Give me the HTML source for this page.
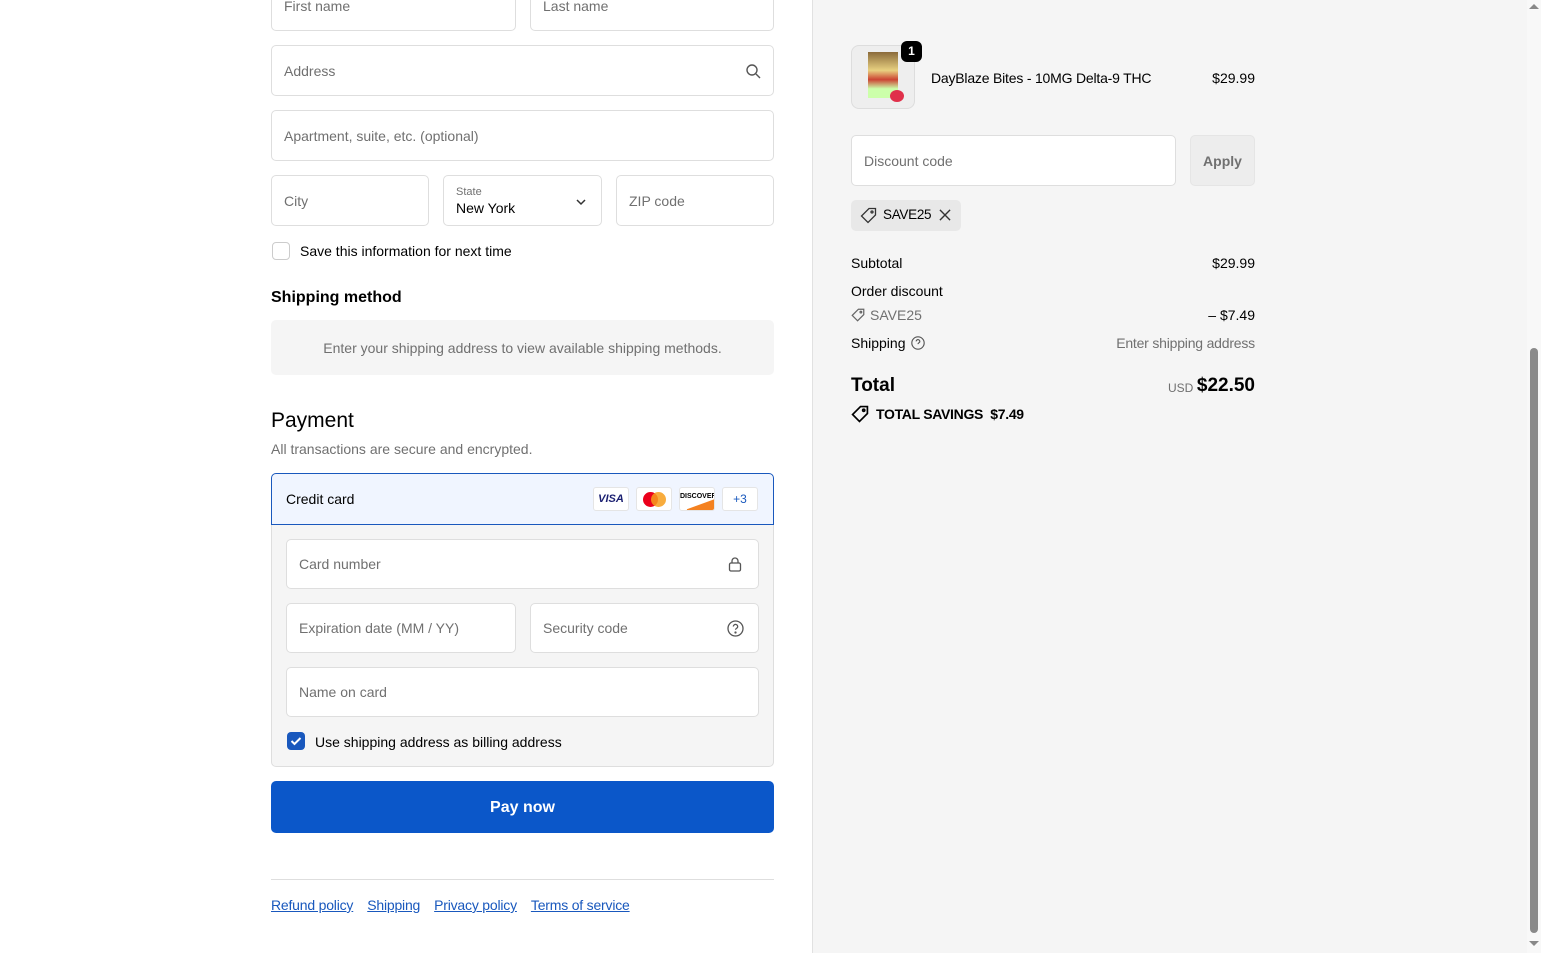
<!DOCTYPE html>
<html><head><meta charset="utf-8"><style>
*{box-sizing:border-box;margin:0;padding:0}
body{width:1541px;height:953px;overflow:hidden;font-family:"Liberation Sans",sans-serif;color:#000;background:#fff;position:relative;font-size:14px}
.right{position:absolute;left:812px;top:0;width:715px;height:953px;background:#f5f5f5;border-left:1px solid #e1e1e1}
.sb{position:absolute;left:1527px;top:0;width:14px;height:953px;background:#f8f8f8}
.thumb{position:absolute;left:1530px;top:348px;width:8px;height:585px;background:#8a8a8a;border-radius:4px}
.inp{position:absolute;border:1px solid #dedede;border-radius:5px;background:#fff;color:#707070;font-size:14px;padding-left:12px;display:flex;align-items:center}
.abs{position:absolute}
.r{position:absolute;right:286px}
a{color:#1958bd;text-decoration:underline}
.grey{color:#707070}
</style></head><body>
<div class="inp" style="left:271px;top:-20px;width:245px;height:51px;align-items:flex-end;padding-bottom:16px">First name</div>
<div class="inp" style="left:530px;top:-20px;width:244px;height:51px;align-items:flex-end;padding-bottom:16px">Last name</div>
<div class="inp" style="left:271px;top:45px;width:503px;height:51px">Address
<svg class="abs" style="left:473px;top:17px" width="16" height="16" viewBox="0 0 16 16" fill="none" stroke="#555" stroke-width="1.4"><circle cx="7" cy="7" r="5"/><path d="M11 11l4 4"/></svg></div>
<div class="inp" style="left:271px;top:110px;width:503px;height:51px">Apartment, suite, etc. (optional)</div>
<div class="inp" style="left:271px;top:175px;width:158px;height:51px">City</div>
<div class="inp" style="left:443px;top:175px;width:159px;height:51px;display:block;padding-top:10px"><div style="font-size:11px">State</div><div style="color:#000;font-size:14px;margin-top:2px">New York</div>
<svg class="abs" style="left:131px;top:20px" width="12" height="12" viewBox="0 0 12 12" fill="none" stroke="#333" stroke-width="1.5"><path d="M2 4l4 4 4-4"/></svg></div>
<div class="inp" style="left:616px;top:175px;width:158px;height:51px">ZIP code</div>
<div class="abs" style="left:272px;top:242px;width:18px;height:18px;border:1px solid #ccc;border-radius:4px"></div>
<div class="abs" style="left:300px;top:243px">Save this information for next time</div>
<div class="abs" style="left:271px;top:289px;font-size:16px;font-weight:bold">Shipping method</div>
<div class="abs grey" style="left:271px;top:320px;width:503px;height:55px;background:#f5f5f5;border-radius:5px;display:flex;align-items:center;justify-content:center">Enter your shipping address to view available shipping methods.</div>
<div class="abs" style="left:271px;top:409px;font-size:21px">Payment</div>
<div class="abs grey" style="left:271px;top:441px">All transactions are secure and encrypted.</div>
<div class="abs" style="left:271px;top:524px;width:503px;height:243px;background:#f5f5f5;border:1px solid #dedede;border-top:none;border-radius:0 0 5px 5px"></div>
<div class="abs" style="left:271px;top:473px;width:503px;height:52px;border:1px solid #1958bd;border-radius:5px 5px 0 0;background:#f0f5ff"></div>
<div class="abs" style="left:286px;top:491px">Credit card</div>
<div class="abs" style="left:593px;top:487px;width:36px;height:24px;background:#fff;border:1px solid #e5e5e5;border-radius:3px;font-size:11px;font-weight:bold;font-style:italic;color:#1a1f71;text-align:center;line-height:22px">VISA</div>
<div class="abs" style="left:636px;top:487px;width:36px;height:24px;background:#fff;border:1px solid #e5e5e5;border-radius:3px"><div class="abs" style="left:6px;top:4px;width:15px;height:15px;border-radius:50%;background:#eb001b"></div><div class="abs" style="left:14px;top:4px;width:15px;height:15px;border-radius:50%;background:#f79e1b;opacity:.85"></div></div>
<div class="abs" style="left:679px;top:487px;width:36px;height:24px;background:#fff;border:1px solid #e5e5e5;border-radius:3px;font-size:7px;font-weight:bold;text-align:center;padding-top:5px;overflow:hidden">DISCOVER<div class="abs" style="left:8px;top:14px;width:40px;height:14px;background:#f48120;transform:rotate(-20deg)"></div></div>
<div class="abs" style="left:722px;top:487px;width:36px;height:24px;background:#fff;border:1px solid #e5e5e5;border-radius:3px;font-size:12px;color:#1958bd;text-align:center;line-height:22px">+3</div>
<div class="inp" style="left:286px;top:539px;width:473px;height:50px">Card number
<svg class="abs" style="left:441px;top:16px" width="14" height="16" viewBox="0 0 14 16" fill="none" stroke="#555" stroke-width="1.3"><rect x="1.5" y="7" width="11" height="8" rx="1.5"/><path d="M4 7V5a3 3 0 016 0v2"/></svg></div>
<div class="inp" style="left:286px;top:603px;width:230px;height:50px">Expiration date (MM / YY)</div>
<div class="inp" style="left:530px;top:603px;width:229px;height:50px">Security code
<svg class="abs" style="left:196px;top:16px" width="17" height="17" viewBox="0 0 17 17" fill="none" stroke="#555" stroke-width="1.3"><circle cx="8.5" cy="8.5" r="7.5"/><path d="M6.3 6.5a2.2 2.2 0 114.2 1c-.6.7-2 1-2 2.3"/><circle cx="8.5" cy="12.5" r=".5" fill="#555"/></svg></div>
<div class="inp" style="left:286px;top:667px;width:473px;height:50px">Name on card</div>
<div class="abs" style="left:287px;top:732px;width:18px;height:18px;background:#1958bd;border-radius:4px"><svg width="18" height="18" viewBox="0 0 18 18" fill="none" stroke="#fff" stroke-width="2"><path d="M4.5 9l3 3 6-6"/></svg></div>
<div class="abs" style="left:315px;top:734px">Use shipping address as billing address</div>
<div class="abs" style="left:271px;top:781px;width:503px;height:52px;background:#0b57c9;border-radius:5px;color:#fff;font-weight:bold;font-size:16px;display:flex;align-items:center;justify-content:center;padding-top:2px">Pay now</div>
<div class="abs" style="left:271px;top:879px;width:503px;border-top:1px solid #dedede"></div>
<div class="abs" style="left:271px;top:897px;font-size:14px;letter-spacing:-0.2px"><a>Refund policy</a><a style="margin-left:14px">Shipping</a><a style="margin-left:14px">Privacy policy</a><a style="margin-left:14px">Terms of service</a></div>

<div class="right"></div>
<div class="abs" style="left:851px;top:45px;width:64px;height:64px;border:1px solid #ddd;border-radius:8px;background:#eee;overflow:hidden">
<div class="abs" style="left:16px;top:6px;width:30px;height:46px;background:linear-gradient(#8a6a3a,#e8d080 40%,#c43 60%,#cfa 80%)"></div>
<div class="abs" style="left:38px;top:44px;width:14px;height:12px;border-radius:50%;background:#e0304a"></div></div>
<div class="abs" style="left:901px;top:41px;width:21px;height:21px;background:#000;color:#fff;border-radius:6px;font-size:12px;font-weight:bold;text-align:center;line-height:21px">1</div>
<div class="abs" style="left:931px;top:70px;letter-spacing:-0.2px">DayBlaze Bites - 10MG Delta-9 THC</div>
<div class="r" style="top:70px">$29.99</div>
<div class="inp" style="left:851px;top:135px;width:325px;height:51px">Discount code</div>
<div class="abs" style="left:1190px;top:135px;width:65px;height:51px;border:1px solid #e5e5e5;background:#ededed;border-radius:5px;color:#707070;font-weight:bold;display:flex;align-items:center;justify-content:center">Apply</div>
<div class="abs" style="left:851px;top:200px;width:110px;height:31px;background:#e8e8e8;border-radius:5px"></div>
<svg class="abs" style="left:860px;top:207px" width="17" height="17" viewBox="0 0 17 17" fill="none" stroke="#333" stroke-width="1.3"><path d="M9 1.5h6.5V8l-7.5 7.5-6.5-6.5z"/><circle cx="12" cy="5" r="1"/></svg>
<div class="abs" style="left:883px;top:207px;font-size:13.5px;letter-spacing:-0.3px">SAVE25</div>
<svg class="abs" style="left:939px;top:209px" width="12" height="12" viewBox="0 0 13 13" stroke="#333" stroke-width="1.5"><path d="M1 1l11 11M12 1L1 12"/></svg>
<div class="abs" style="left:851px;top:255px">Subtotal</div><div class="r" style="top:255px">$29.99</div>
<div class="abs" style="left:851px;top:283px">Order discount</div>
<svg class="abs" style="left:851px;top:308px" width="14" height="14" viewBox="0 0 17 17" fill="none" stroke="#666" stroke-width="1.5"><path d="M9 1.5h6.5V8l-7.5 7.5-6.5-6.5z"/><circle cx="12" cy="5" r="1"/></svg>
<div class="abs grey" style="left:870px;top:307px">SAVE25</div><div class="r" style="top:307px">– $7.49</div>
<div class="abs" style="left:851px;top:335px">Shipping</div>
<svg class="abs" style="left:911px;top:336px" width="14" height="14" viewBox="0 0 17 17" fill="none" stroke="#555" stroke-width="1.4"><circle cx="8.5" cy="8.5" r="7.5"/><path d="M6.3 6.5a2.2 2.2 0 114.2 1c-.6.7-2 1-2 2.3"/></svg>
<div class="r grey" style="top:335px;letter-spacing:-0.2px">Enter shipping address</div>
<div class="abs" style="left:851px;top:375px;font-size:19px;font-weight:bold">Total</div>
<div class="abs grey" style="left:1168px;top:381px;font-size:12px">USD</div>
<div class="r" style="top:375px;font-size:19px;font-weight:bold">$22.50</div>
<svg class="abs" style="left:851px;top:405px" width="18" height="18" viewBox="0 0 17 17" fill="none" stroke="#000" stroke-width="1.6"><path d="M9 1.5h6.5V8l-7.5 7.5-6.5-6.5z"/><circle cx="12" cy="5" r="1"/></svg>
<div class="abs" style="left:876px;top:406px;font-weight:bold;font-size:14px;letter-spacing:-0.3px">TOTAL SAVINGS&nbsp; $7.49</div>
<div class="sb"></div><div class="thumb"></div>
<div class="abs" style="left:1529px;top:4px;width:0;height:0;border:5px solid transparent;border-bottom-color:#888;border-top:0"></div>
<div class="abs" style="left:1529px;top:941px;width:0;height:0;border:5px solid transparent;border-top-color:#888;border-bottom:0"></div>
</body></html>
